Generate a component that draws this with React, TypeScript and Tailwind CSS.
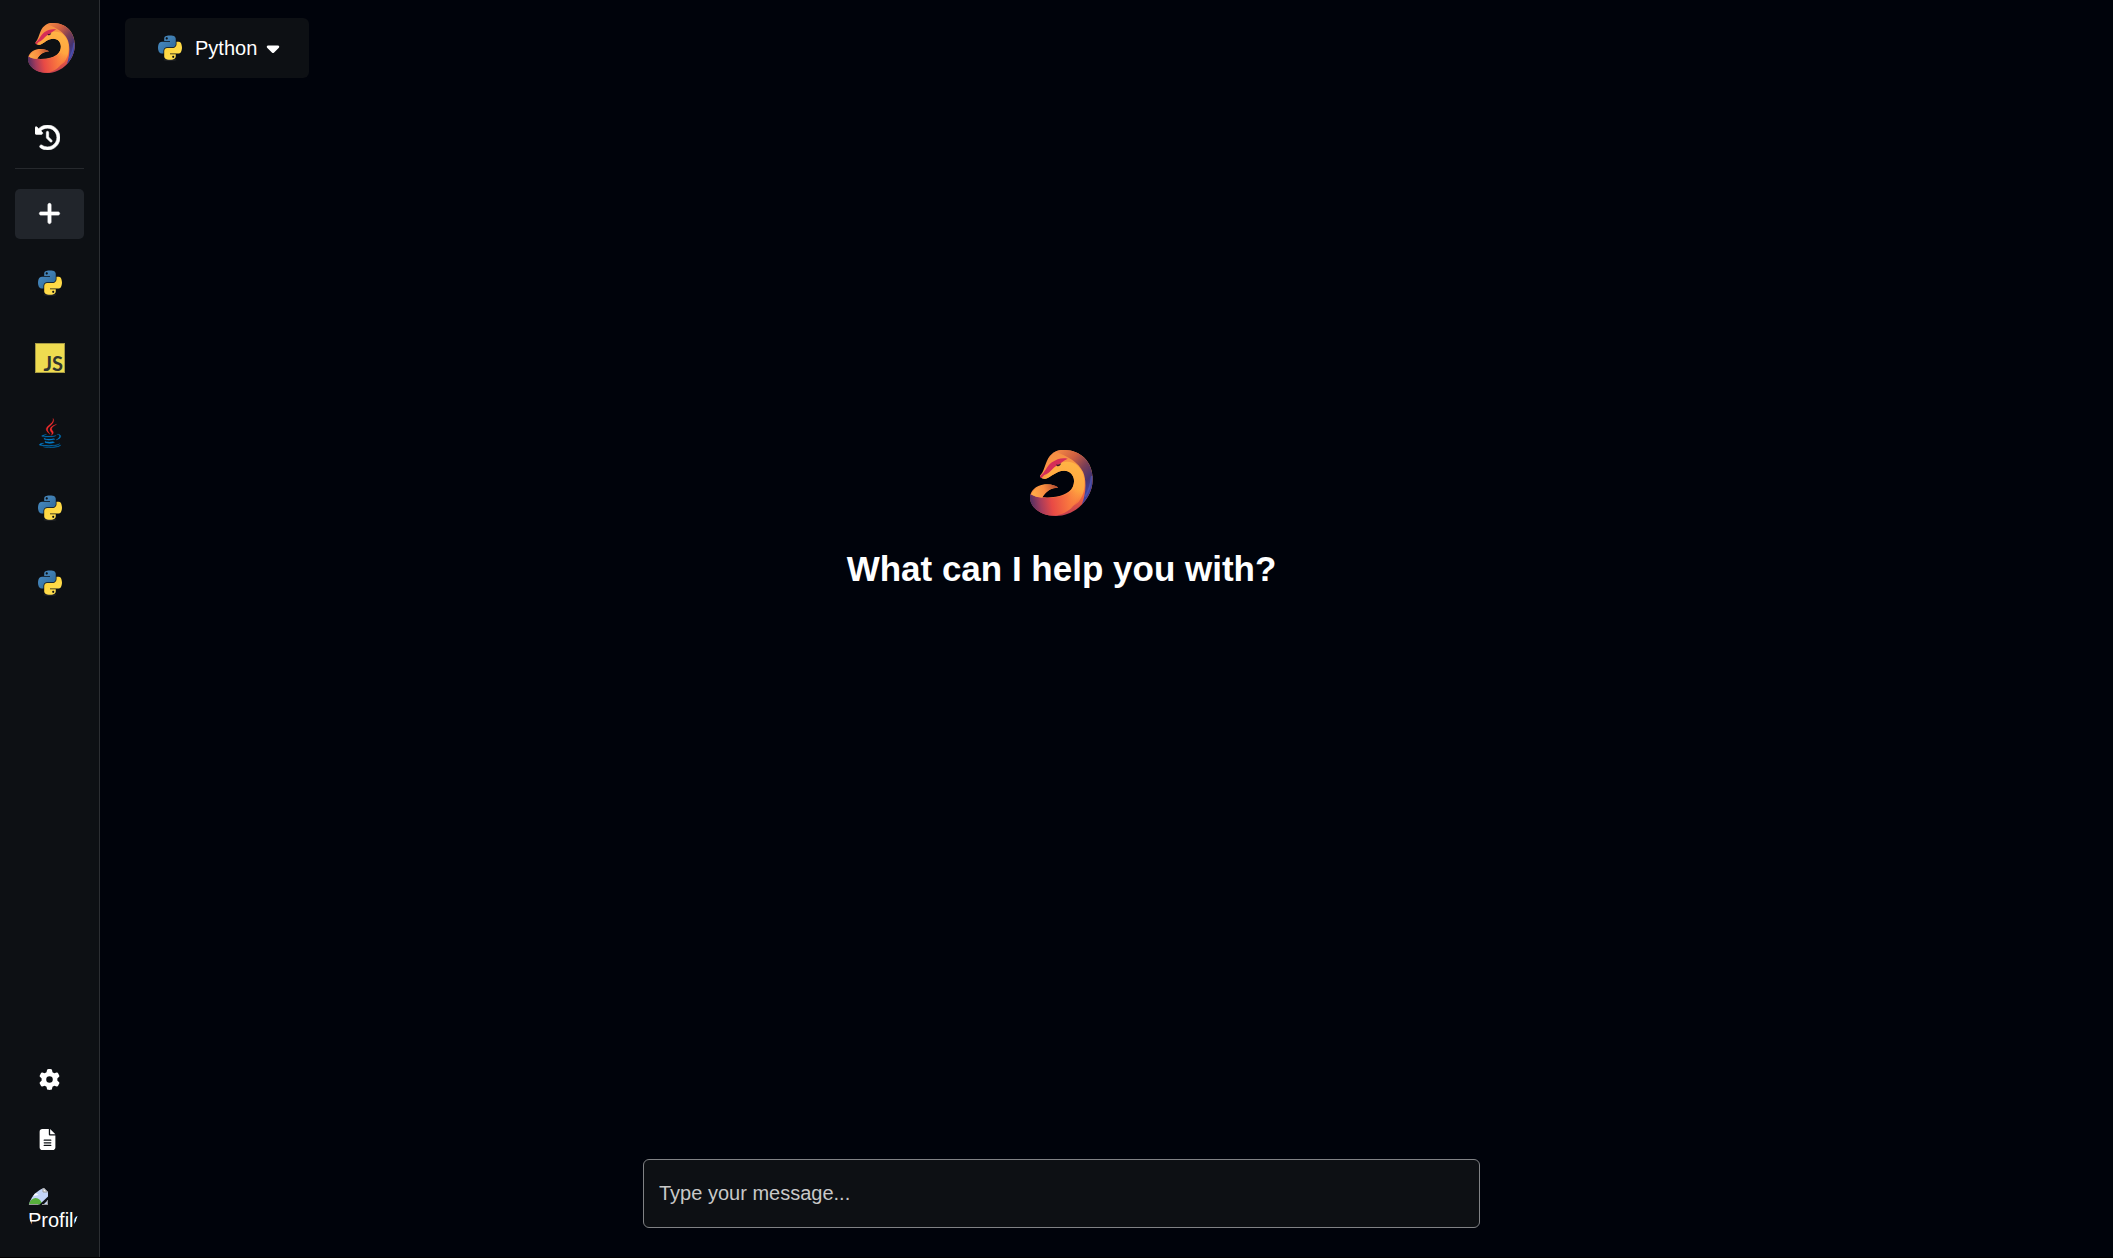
import { FaCaretDown, FaClockRotateLeft, FaFileLines, FaGear, FaPlus } from "react-icons/fa6";

function GooseLogo({ id, className }: { id: string; className: string }) {
  const ref = (name: string) => `url(#${id}-${name})`;
  return (
    <svg viewBox="60 60 190 198" preserveAspectRatio="none" className={className}>
      <defs>
        <linearGradient id={`${id}-body`} x1="110" y1="60" x2="150" y2="260" gradientUnits="userSpaceOnUse">
          <stop offset="0" stopColor="#f58a45" />
          <stop offset="0.45" stopColor="#fb9f42" />
          <stop offset="0.75" stopColor="#f3643f" />
          <stop offset="1" stopColor="#c23e50" />
        </linearGradient>
        <linearGradient id={`${id}-back`} x1="130" y1="70" x2="245" y2="170" gradientUnits="userSpaceOnUse">
          <stop offset="0" stopColor="#f58a45" />
          <stop offset="0.35" stopColor="#cf5f41" />
          <stop offset="0.62" stopColor="#7c3f55" />
          <stop offset="0.85" stopColor="#47336f" />
          <stop offset="1" stopColor="#42409a" />
        </linearGradient>
        <linearGradient id={`${id}-neck`} x1="190" y1="95" x2="150" y2="245" gradientUnits="userSpaceOnUse">
          <stop offset="0" stopColor="#ffb545" />
          <stop offset="0.5" stopColor="#ffa640" />
          <stop offset="0.85" stopColor="#f4603f" />
          <stop offset="1" stopColor="#e24f45" />
        </linearGradient>
        <linearGradient id={`${id}-belly`} x1="60" y1="215" x2="210" y2="190" gradientUnits="userSpaceOnUse">
          <stop offset="0" stopColor="#4d2f62" />
          <stop offset="0.2" stopColor="#a53b5c" />
          <stop offset="0.42" stopColor="#e84a45" />
          <stop offset="0.75" stopColor="#f8753f" />
          <stop offset="1" stopColor="#ffa240" stopOpacity="0" />
        </linearGradient>
        <linearGradient id={`${id}-wing`} x1="64" y1="195" x2="145" y2="170" gradientUnits="userSpaceOnUse">
          <stop offset="0" stopColor="#ffb04a" />
          <stop offset="0.5" stopColor="#f98b40" />
          <stop offset="1" stopColor="#a8442f" />
        </linearGradient>
      </defs>
      <path
        d="M90 137C101 127 104 108 111 93C121 70 138 60 160 60C210 59 249 92 249 148C249 207 197 258 138 258C93 258 60 232 60 202C61 184 76 167 104 163C122 161 135 166 145 173C126 173 110 182 97 202C140 205 177 194 189 171C199 149 190 124 164 122C139 121 126 141 104 147C96 146 91 142 90 137Z"
        fill={ref("body")}
      />
      <path
        d="M136 65C144 61 151 60 160 60C210 59 249 92 249 148C249 178 236 204 216 224C228 196 232 152 220 126C207 98 175 78 136 65Z"
        fill={ref("back")}
      />
      <path
        d="M104 147C112 129 127 113 145 102C164 92 188 92 204 108C231 134 231 186 207 215C186 236 154 237 128 226L122 203C155 202 180 192 189 171C199 149 190 124 164 122C139 121 126 141 104 147Z"
        fill={ref("neck")}
      />
      <path
        d="M61 193C86 208 147 207 171 192C194 180 207 165 219 130C223 180 207 211 187 232C160 259 118 264 91 247C68 235 55 215 61 193Z"
        fill={ref("belly")}
      />
      <path
        d="M90 138C106 128 110 108 126 97C141 87 156 82 174 86C160 92 154 100 143 106C128 113 120 131 103 135L95 144C92 143 90 141 90 138Z"
        fill="#d52d58"
      />
      <path d="M64 193C75 172 103 159 128 165C136 167 142 169 145 173C122 172 107 184 97 203C83 203 72 199 64 193Z" fill={ref("wing")} />
      <path d="M139 103C143 105 148 104 154 100C152 107 146 111 141 108Z" fill="#3d1730" />
      <path d="M226 200C239 181 244 164 246 138" fill="none" stroke="#5059b4" strokeWidth="5" opacity="0.7" />
    </svg>
  );
}

function PythonLogo({ id }: { id: string }) {
  return (
    <svg viewBox="12.8 -0.5 102.4 111" className="h-[26px] w-[24px]">
      <defs>
        <linearGradient id={`${id}-blue`} x1="20" y1="5" x2="80" y2="70" gradientUnits="userSpaceOnUse">
          <stop offset="0" stopColor="#4b8fc6" />
          <stop offset="1" stopColor="#306998" />
        </linearGradient>
        <linearGradient id={`${id}-yellow`} x1="55" y1="45" x2="90" y2="100" gradientUnits="userSpaceOnUse">
          <stop offset="0" stopColor="#ffd43b" />
          <stop offset="1" stopColor="#ffe052" />
        </linearGradient>
      </defs>
      <ellipse cx="64" cy="106" rx="28" ry="4" fill="#555" opacity="0.35" />
      <path
        fill={`url(#${id}-blue)`}
        d="M63.391 1.988c-4.222.02-8.252.379-11.8 1.007-10.45 1.846-12.346 5.71-12.346 12.837v9.411h24.693v3.137H29.977c-7.176 0-13.46 4.313-15.426 12.521-2.268 9.405-2.368 15.275 0 25.096 1.755 7.311 5.947 12.519 13.124 12.519h8.491V67.234c0-8.151 7.051-15.34 15.426-15.34h24.665c6.866 0 12.346-5.654 12.346-12.548V15.833c0-6.693-5.646-11.72-12.346-12.837-4.244-.706-8.645-1.027-12.866-1.008zM50.037 9.557c2.55 0 4.634 2.117 4.634 4.721 0 2.593-2.083 4.69-4.634 4.69-2.56 0-4.633-2.097-4.633-4.69-.001-2.604 2.073-4.721 4.633-4.721z"
      />
      <path
        fill={`url(#${id}-yellow)`}
        d="M91.682 28.38v10.966c0 8.5-7.208 15.655-15.426 15.655H51.591c-6.756 0-12.346 5.783-12.346 12.549v23.515c0 6.691 5.818 10.628 12.346 12.547 7.816 2.297 15.312 2.713 24.665 0 6.216-1.801 12.346-5.423 12.346-12.547v-9.412H63.938v-3.138h37.012c7.176 0 9.852-5.005 12.348-12.519 2.578-7.735 2.467-15.174 0-25.096-1.774-7.145-5.161-12.521-12.348-12.521h-9.268zM77.809 87.927c2.561 0 4.634 2.097 4.634 4.692 0 2.602-2.074 4.719-4.634 4.719-2.55 0-4.633-2.117-4.633-4.719 0-2.595 2.083-4.692 4.633-4.692z"
      />
    </svg>
  );
}

function JavaLogo() {
  return (
    <svg viewBox="0 0 128 128" className="size-[30px]">
      <g fill="#0378c4" stroke="#0378c4" strokeWidth="1">
        <path d="M47.617 98.12s-4.767 2.774 3.397 3.71c9.892 1.13 14.947.968 25.845-1.092 0 0 2.871 1.795 6.873 3.351-24.439 10.47-55.308-.607-36.115-5.969zm-2.988-13.665s-5.348 3.959 2.823 4.805c10.567 1.091 18.91 1.18 33.354-1.6 0 0 1.993 2.025 5.132 3.131-29.542 8.64-62.446.68-41.309-6.336z" />
        <path d="M102.123 108.229s3.529 2.91-3.888 5.159c-14.102 4.272-58.706 5.56-71.094.171-4.451-1.938 3.899-4.625 6.526-5.192 2.739-.593 4.303-.485 4.303-.485-4.953-3.487-32.013 6.85-13.743 9.815 49.821 8.076 90.817-3.637 77.896-9.468zM49.912 70.294s-22.686 5.389-8.033 7.348c6.188.828 18.518.638 30.011-.326 9.39-.789 18.813-2.474 18.813-2.474s-3.308 1.419-5.704 3.053c-23.042 6.061-67.544 3.238-54.731-2.958 10.832-5.239 19.644-4.643 19.644-4.643zm40.697 22.747c23.421-12.167 12.591-23.86 5.032-22.285-1.848.385-2.677.72-2.677.72s.688-1.079 2-1.543c14.953-5.255 26.451 15.503-4.823 23.725 0-.002.359-.327.468-.617z" />
        <path d="M52.214 126.021c22.476 1.437 57-.8 57.817-11.436 0 0-1.571 4.032-18.577 7.231-19.186 3.612-42.854 3.191-56.887.874 0 .001 2.875 2.381 17.647 3.331z" />
      </g>
      <g fill="#f02c2d" stroke="#f02c2d" strokeWidth="1">
        <path d="M69.802 61.271c6.025 6.935-1.58 13.17-1.58 13.17s15.289-7.891 8.269-17.777c-6.559-9.215-11.587-13.792 15.635-29.58 0 .001-42.731 10.67-22.324 34.187z" />
        <path d="M76.491 1.587s12.968 12.976-12.303 32.923c-20.266 16.006-4.621 25.13-.007 35.559-11.831-10.673-20.509-20.07-14.688-28.815 8.548-12.834 32.229-19.059 26.998-39.667z" />
      </g>
    </svg>
  );
}

function JsLogo() {
  return (
    <span className="flex size-[30px] items-end justify-end border border-[#a79b44] bg-[#eedb50] pr-[1px] font-['Lato'] text-[20px] leading-[18px] font-bold text-[#31342f]">
      JS
    </span>
  );
}

function BrokenImage() {
  return (
    <svg viewBox="0 0 20 20" className="size-5 shrink-0">
      <path d="M0 0H14L20 6V18.5H0Z" fill="#c3d4f8" />
      <path d="M15 1.5V6H19.5Z" fill="#f3f3f3" stroke="#999" />
      <path d="M5 10C5.5 7 9 6.5 10.5 9Z" fill="#fff" />
      <path d="M0 18.5C3 12 8 10 12 14L15 18.5Z" fill="#57b03c" />
      <path d="M10 20L20 10.5V14L14 20Z" fill="#0d1014" />
      <path d="M0 18.5H10M14 18.5H19.5V14.5" fill="none" stroke="#999" strokeWidth="1.2" />
    </svg>
  );
}

const chats = ["python", "js", "java", "python", "python"];

function ChatIcon({ kind, id }: { kind: string; id: string }) {
  if (kind === "js") return <JsLogo />;
  if (kind === "java") return <JavaLogo />;
  return <PythonLogo id={id} />;
}

export default function App() {
  return (
    <div className="h-[1258px] bg-black font-['Liberation_Sans',Arial,sans-serif] text-white">
      <div className="flex h-[1257px] w-full overflow-hidden bg-[#00030b]">
        <aside className="flex w-[100px] shrink-0 flex-col border-r border-[#2c2f33] bg-[#0d1014]">
          <div className="pt-[23px] pl-[28px]">
            <GooseLogo id="side" className="h-[50px] w-[47px]" />
          </div>
          <div className="mx-[15px] flex h-[96px] items-end border-b border-[#26292d] pb-[18px] pl-[20px]">
            <FaClockRotateLeft className="size-[25px] [stroke-width:12px]" />
          </div>
          <button className="mx-[15px] mt-[20px] flex h-[50px] shrink-0 items-center justify-center rounded-[5px] bg-[#21252b] pb-[1px]">
            <FaPlus className="size-[25px] [stroke-width:14px]" />
          </button>
          <nav className="mt-[7px] flex flex-col pl-[1px]">
            {chats.map((kind, i) => (
              <div key={i} className="flex h-[75px] items-center justify-center pb-[1px]">
                <ChatIcon kind={kind} id={`chat${i}`} />
              </div>
            ))}
          </nav>
          <div className="mt-auto flex flex-col pb-[21px]">
            <FaGear className="ml-[39px] size-[21px]" />
            <FaFileLines className="mt-[39px] ml-[37px] size-[21px]" />
            <div className="mt-[36px] ml-[28px] size-[50px] overflow-hidden rounded-full text-xl leading-[23px]">
              <BrokenImage />
              <span className="mt-[3px] block">Profile</span>
            </div>
          </div>
        </aside>
        <main className="flex flex-1 flex-col items-center pr-[90px]">
          <button className="mt-[18px] ml-[25px] flex h-[60px] w-[184px] items-center self-start rounded-[6px] bg-[#0d1014] pl-[33px] text-xl">
            <PythonLogo id="picker" />
            <span className="ml-[13px]">Python</span>
            <FaCaretDown className="ml-[6px] size-[20px]" />
          </button>
          <div className="mt-[372px] flex flex-col items-center">
            <GooseLogo id="hero" className="h-[66px] w-[63px]" />
            <h1 className="mt-[33px] text-[35px] leading-[40px] font-bold">What can I help you with?</h1>
          </div>
          <input
            placeholder="Type your message..."
            className="mt-auto mb-[29px] h-[69px] w-[837px] rounded-[6px] border border-[#808285] bg-[#0d1014] px-[15px] text-xl outline-none placeholder:text-[#c8c8c8]"
          />
        </main>
      </div>
    </div>
  );
}
